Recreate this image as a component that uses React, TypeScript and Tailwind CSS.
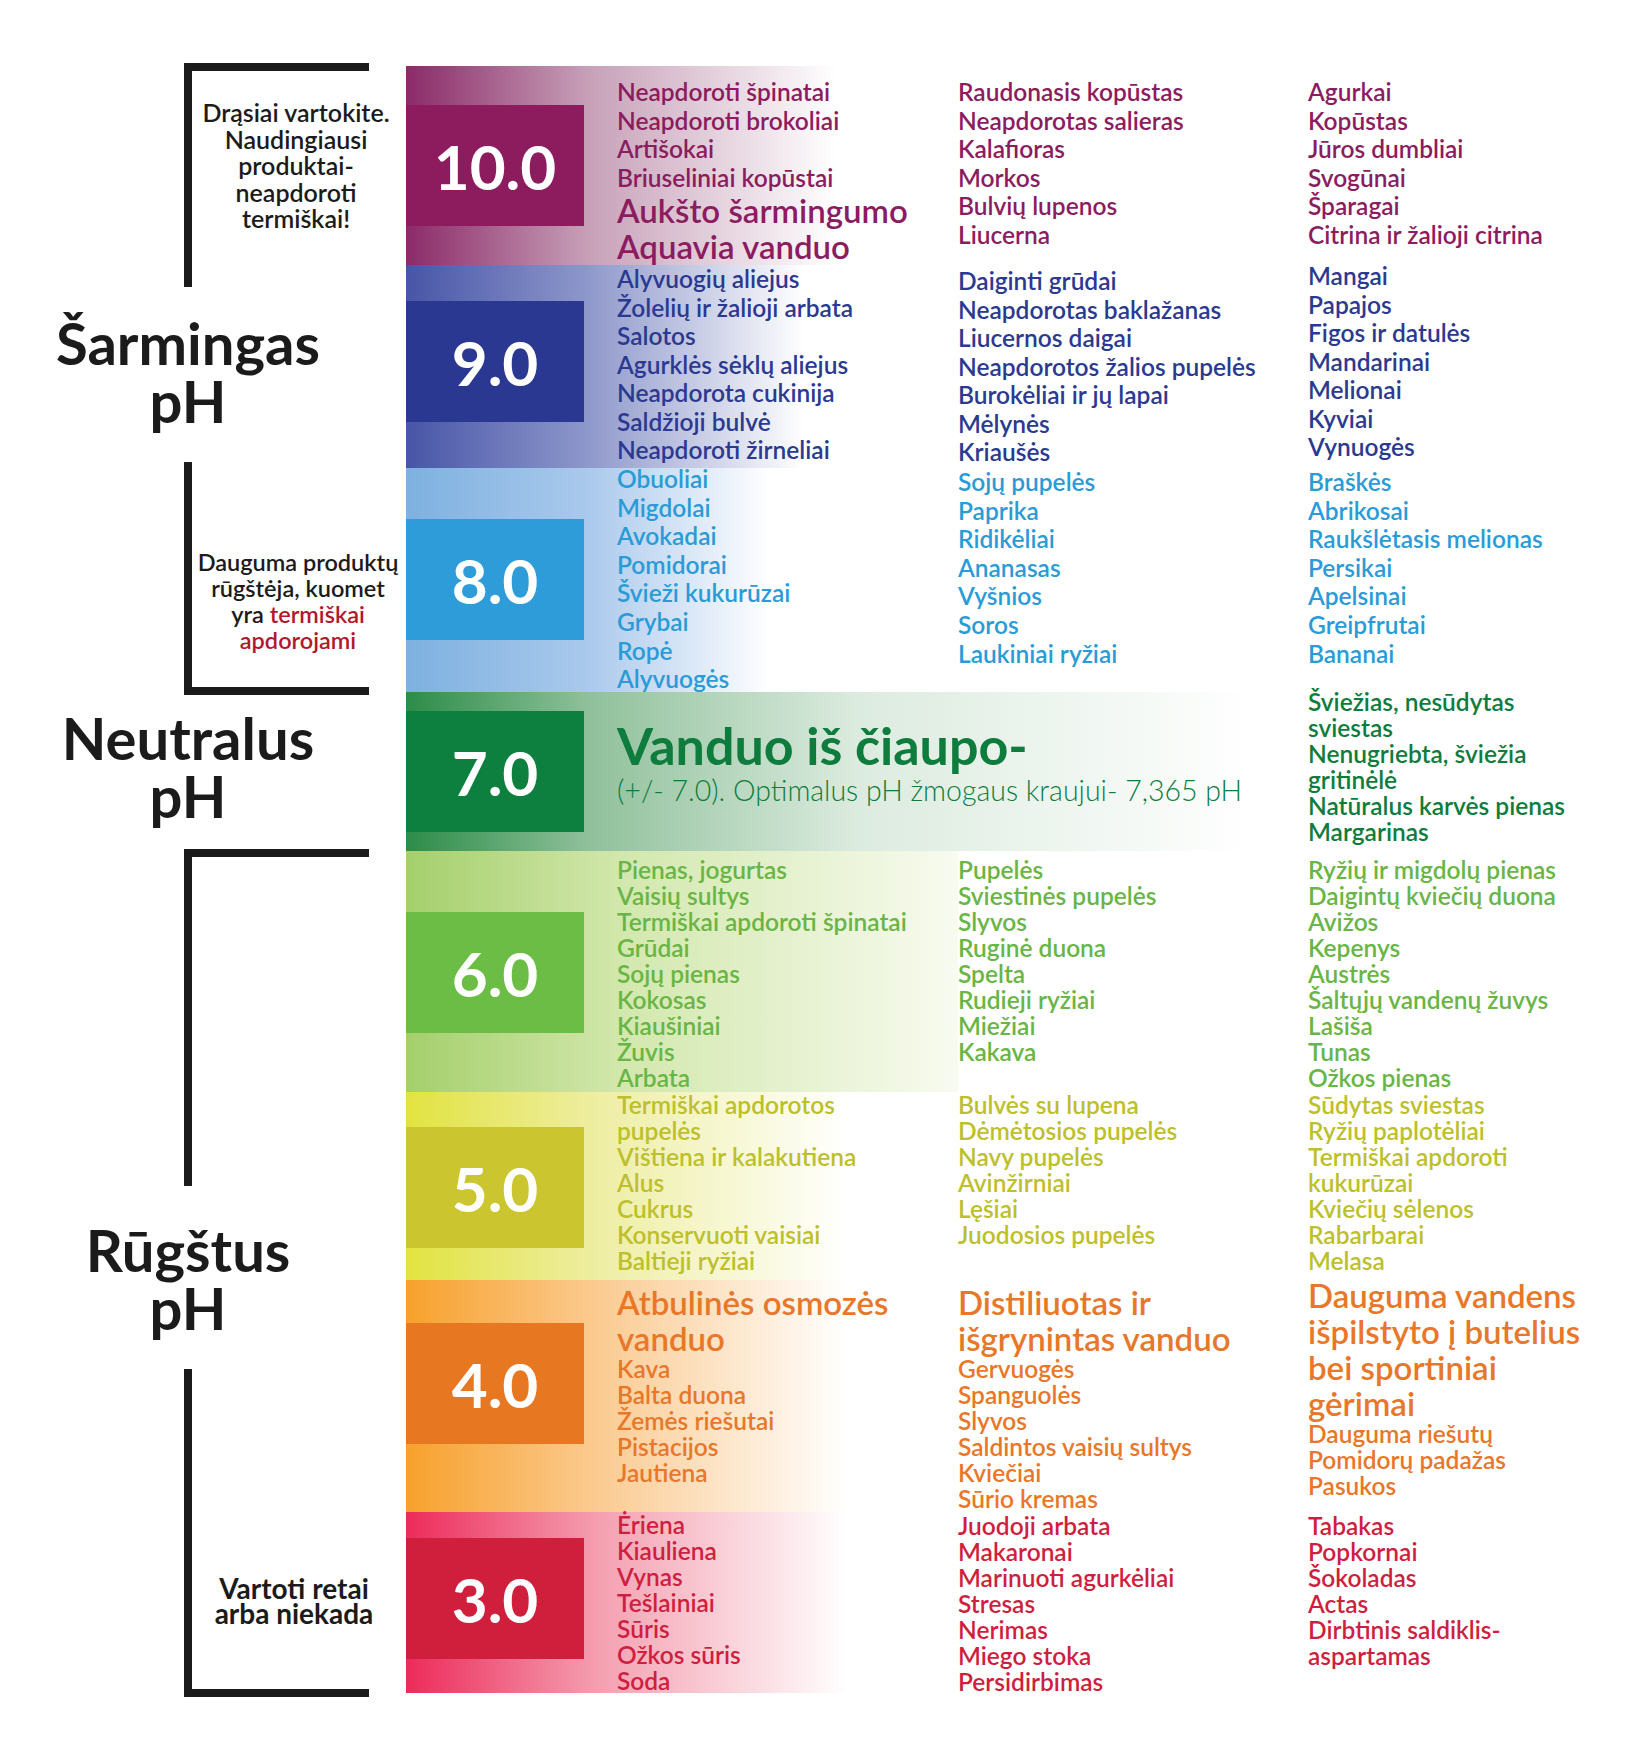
import React from "react";

type Item = string | { t: string; big: true };

type BandData = {
  num: string;
  h: string;
  grad: string;
  box: string;
  boxMt: string;
  color: string;
  lh: string;
  cols: { pt: string; items: Item[] }[];
};

const bands: BandData[] = [
  {
    num: "10.0",
    h: "h-[199px]",
    grad: "bg-[linear-gradient(to_right,#8b2a68_0%,#c7a0b8_33%,#ffffff_78%)]",
    box: "bg-[#8c1c5e]",
    boxMt: "mt-[39px]",
    color: "text-[#8b1c5f]",
    lh: "leading-[28.5px]",
    cols: [
      {
        pt: "pt-[12px]",
        items: [
          "Neapdoroti špinatai",
          "Neapdoroti brokoliai",
          "Artišokai",
          "Briuseliniai kopūstai",
          { t: "Aukšto šarmingumo", big: true },
          { t: "Aquavia vanduo", big: true },
        ],
      },
      {
        pt: "pt-[12px]",
        items: ["Raudonasis kopūstas", "Neapdorotas salieras", "Kalafioras", "Morkos", "Bulvių lupenos", "Liucerna"],
      },
      {
        pt: "pt-[12px]",
        items: ["Agurkai", "Kopūstas", "Jūros dumbliai", "Svogūnai", "Šparagai", "Citrina ir žalioji citrina"],
      },
    ],
  },
  {
    num: "9.0",
    h: "h-[203px]",
    grad: "bg-[linear-gradient(to_right,#4855a7_0%,#8e98cb_33%,#ffffff_72%)]",
    box: "bg-[#2a3891]",
    boxMt: "mt-[36px]",
    color: "text-[#2b3990]",
    lh: "leading-[28.5px]",
    cols: [
      {
        pt: "pt-0",
        items: [
          "Alyvuogių aliejus",
          "Žolelių ir žalioji arbata",
          "Salotos",
          "Agurklės sėklų aliejus",
          "Neapdorota cukinija",
          "Saldžioji bulvė",
          "Neapdoroti žirneliai",
        ],
      },
      {
        pt: "pt-[2px]",
        items: [
          "Daiginti grūdai",
          "Neapdorotas baklažanas",
          "Liucernos daigai",
          "Neapdorotos žalios pupelės",
          "Burokėliai ir jų lapai",
          "Mėlynės",
          "Kriaušės",
        ],
      },
      {
        pt: "-mt-[3px]",
        items: ["Mangai", "Papajos", "Figos ir datulės", "Mandarinai", "Melionai", "Kyviai", "Vynuogės"],
      },
    ],
  },
  {
    num: "8.0",
    h: "h-[224px]",
    grad: "bg-[linear-gradient(to_right,#7db1e0_0%,#aac9ec_33%,#ffffff_66%)]",
    box: "bg-[#2d9cd8]",
    boxMt: "mt-[51px]",
    color: "text-[#2a9bd7]",
    lh: "leading-[28.6px]",
    cols: [
      {
        pt: "-mt-[3px]",
        items: ["Obuoliai", "Migdolai", "Avokadai", "Pomidorai", "Švieži kukurūzai", "Grybai", "Ropė", "Alyvuogės"],
      },
      {
        pt: "pt-0",
        items: ["Sojų pupelės", "Paprika", "Ridikėliai", "Ananasas", "Vyšnios", "Soros", "Laukiniai ryžiai"],
      },
      {
        pt: "pt-0",
        items: ["Braškės", "Abrikosai", "Raukšlėtasis melionas", "Persikai", "Apelsinai", "Greipfrutai", "Bananai"],
      },
    ],
  },
];

const lowerBands: BandData[] = [
  {
    num: "6.0",
    h: "h-[241px]",
    grad: "bg-[linear-gradient(to_right,#a5cf6b_0%,#d3e8ae_40%,#f8fbf0_100%)]",
    box: "bg-[#6bbd45]",
    boxMt: "mt-[61px]",
    color: "text-[#69b545]",
    lh: "leading-[26px]",
    cols: [
      {
        pt: "pt-[6px]",
        items: [
          "Pienas, jogurtas",
          "Vaisių sultys",
          "Termiškai apdoroti špinatai",
          "Grūdai",
          "Sojų pienas",
          "Kokosas",
          "Kiaušiniai",
          "Žuvis",
          "Arbata",
        ],
      },
      {
        pt: "pt-[6px]",
        items: ["Pupelės", "Sviestinės pupelės", "Slyvos", "Ruginė duona", "Spelta", "Rudieji ryžiai", "Miežiai", "Kakava"],
      },
      {
        pt: "pt-[6px]",
        items: [
          "Ryžių ir migdolų pienas",
          "Daigintų kviečių duona",
          "Avižos",
          "Kepenys",
          "Austrės",
          "Šaltųjų vandenų žuvys",
          "Lašiša",
          "Tunas",
          "Ožkos pienas",
        ],
      },
    ],
  },
  {
    num: "5.0",
    h: "h-[188px]",
    grad: "bg-[linear-gradient(to_right,#e2e340_0%,#eeeea4_35%,#ffffff_80%)]",
    box: "bg-[#cbc52f]",
    boxMt: "mt-[35px]",
    color: "text-[#bdbf2d]",
    lh: "leading-[26px]",
    cols: [
      {
        pt: "pt-0",
        items: [
          "Termiškai apdorotos",
          "pupelės",
          "Vištiena ir kalakutiena",
          "Alus",
          "Cukrus",
          "Konservuoti vaisiai",
          "Baltieji ryžiai",
        ],
      },
      {
        pt: "pt-0",
        items: ["Bulvės su lupena", "Dėmėtosios pupelės", "Navy pupelės", "Avinžirniai", "Lęšiai", "Juodosios pupelės"],
      },
      {
        pt: "pt-0",
        items: [
          "Sūdytas sviestas",
          "Ryžių paplotėliai",
          "Termiškai apdoroti",
          "kukurūzai",
          "Kviečių sėlenos",
          "Rabarbarai",
          "Melasa",
        ],
      },
    ],
  },
  {
    num: "4.0",
    h: "h-[232px]",
    grad: "bg-[linear-gradient(to_right,#f7a12c_0%,#fbcb92_35%,#ffffff_80%)]",
    box: "bg-[#e87722]",
    boxMt: "mt-[43px]",
    color: "text-[#e8772a]",
    lh: "leading-[26px]",
    cols: [
      {
        pt: "pt-[4px]",
        items: [
          { t: "Atbulinės osmozės", big: true },
          { t: "vanduo", big: true },
          "Kava",
          "Balta duona",
          "Žemės riešutai",
          "Pistacijos",
          "Jautiena",
        ],
      },
      {
        pt: "pt-[4px]",
        items: [
          { t: "Distiliuotas ir", big: true },
          { t: "išgrynintas vanduo", big: true },
          "Gervuogės",
          "Spanguolės",
          "Slyvos",
          "Saldintos vaisių sultys",
          "Kviečiai",
          "Sūrio kremas",
        ],
      },
      {
        pt: "-mt-[3px]",
        items: [
          { t: "Dauguma vandens", big: true },
          { t: "išpilstyto į butelius", big: true },
          { t: "bei sportiniai", big: true },
          { t: "gėrimai", big: true },
          "Dauguma riešutų",
          "Pomidorų padažas",
          "Pasukos",
        ],
      },
    ],
  },
  {
    num: "3.0",
    h: "h-[181px]",
    grad: "bg-[linear-gradient(to_right,#ec2b5a_0%,#f4a0b1_35%,#ffffff_80%)]",
    box: "bg-[#d01f3c]",
    boxMt: "mt-[26px]",
    color: "text-[#cf1f40]",
    lh: "leading-[26px]",
    cols: [
      {
        pt: "pt-0",
        items: ["Ėriena", "Kiauliena", "Vynas", "Tešlainiai", "Sūris", "Ožkos sūris", "Soda"],
      },
      {
        pt: "pt-[1px]",
        items: ["Juodoji arbata", "Makaronai", "Marinuoti agurkėliai", "Stresas", "Nerimas", "Miego stoka", "Persidirbimas"],
      },
      {
        pt: "pt-[1px]",
        items: ["Tabakas", "Popkornai", "Šokoladas", "Actas", "Dirbtinis saldiklis-", "aspartamas"],
      },
    ],
  },
];

const List = ({ items, pt }: { items: Item[]; pt: string }) => (
  <div className={`flex flex-col ${pt}`}>
    {items.map((it, i) =>
      typeof it === "string" ? (
        <div key={i} className="whitespace-nowrap text-[24.5px]">
          {it}
        </div>
      ) : (
        <div key={i} className="whitespace-nowrap text-[33px] leading-[36px]">
          {it.t}
        </div>
      )
    )}
  </div>
);

const NumBox = ({ num, bg, mt }: { num: string; bg: string; mt: string }) => (
  <div className={`flex h-[121px] w-[178px] shrink-0 items-center justify-center text-[62px] font-bold leading-none text-white ${bg} ${mt}`}>
    {num}
  </div>
);

const Band = ({ b }: { b: BandData }) => (
  <div className={`flex font-semibold ${b.h} ${b.color} ${b.lh}`}>
    <div className={`flex w-[552px] shrink-0 items-start ${b.grad}`}>
      <NumBox num={b.num} bg={b.box} mt={b.boxMt} />
      <div className="ml-[33px]">
        <List items={b.cols[0].items} pt={b.cols[0].pt} />
      </div>
    </div>
    <div className="w-[350px] shrink-0">
      <List items={b.cols[1].items} pt={b.cols[1].pt} />
    </div>
    <div>
      <List items={b.cols[2].items} pt={b.cols[2].pt} />
    </div>
  </div>
);

const Label = ({ top, mt }: { top: string; mt: string }) => (
  <div className={`w-[376px] text-center text-[58px] font-bold leading-[58px] text-[#1b1b1b] ${mt}`}>
    <div>{top}</div>
    <div>pH</div>
  </div>
);

export default function App() {
  return (
    <div className="flex h-[1747px] w-[1650px] overflow-hidden bg-white font-['Lato',sans-serif]">
      {/* left: brackets and group labels */}
      <div className="flex w-[406px] shrink-0 flex-col text-[#1b1b1b]">
        <div className="ml-[184px] mt-[63px] h-[224px] w-[185px] border-l-8 border-t-8 border-[#1b1b1b] pt-[28px]">
          <div className="w-[208px] whitespace-nowrap text-center text-[25px] font-semibold leading-[26.5px]">
            <div>Drąsiai vartokite.</div>
            <div>Naudingiausi</div>
            <div>produktai-</div>
            <div>neapdoroti</div>
            <div>termiškai!</div>
          </div>
        </div>
        <Label top="Šarmingas" mt="mt-[27px]" />
        <div className="ml-[184px] mt-[32px] h-[233px] w-[185px] border-b-8 border-l-8 border-[#1b1b1b] pt-[87px]">
          <div className="w-[212px] whitespace-nowrap text-center text-[23.5px] font-semibold leading-[26px]">
            <div>Dauguma produktų</div>
            <div>rūgštėja, kuomet</div>
            <div>
              yra <span className="text-[#b1182c]">termiškai</span>
            </div>
            <div className="text-[#b1182c]">apdorojami</div>
          </div>
        </div>
        <Label top="Neutralus" mt="mt-[14px]" />
        <div className="ml-[184px] mt-[24px] h-[337px] w-[185px] border-l-8 border-t-8 border-[#1b1b1b]" />
        <Label top="Rūgštus" mt="mt-[35px]" />
        <div className="ml-[184px] mt-[32px] h-[328px] w-[185px] border-b-8 border-l-8 border-[#1b1b1b] pt-[207px]">
          <div className="w-[204px] whitespace-nowrap text-center text-[28px] font-bold leading-[25px]">
            <div>Vartoti retai</div>
            <div>arba niekada</div>
          </div>
        </div>
      </div>

      {/* right: pH scale */}
      <div className="flex flex-1 flex-col pt-[66px]">
        {bands.map((b) => (
          <Band key={b.num} b={b} />
        ))}

        <div className="flex h-[159px] font-semibold leading-[26px] text-[#0e7c3d]">
          <div className="flex w-[902px] shrink-0 items-start bg-[linear-gradient(to_right,#2b8c48_0%,#8fc09a_20%,#dcebdf_50%,#ffffff_94%)]">
            <NumBox num="7.0" bg="bg-[#0d8040]" mt="mt-[19px]" />
            <div className="ml-[33px] pt-[25px]">
              <div className="whitespace-nowrap text-[52px] font-bold leading-[56px]">Vanduo iš čiaupo-</div>
              <div className="whitespace-nowrap text-[28.5px] font-light leading-[34px]">
                (+/- 7.0). Optimalus pH žmogaus kraujui- 7,365 pH
              </div>
            </div>
          </div>
          <div className="-mt-[3px] whitespace-nowrap text-[24.5px]">
            <div>Šviežias, nesūdytas</div>
            <div>sviestas</div>
            <div>Nenugriebta, šviežia</div>
            <div>gritinėlė</div>
            <div>Natūralus karvės pienas</div>
            <div>Margarinas</div>
          </div>
        </div>

        {lowerBands.map((b) => (
          <Band key={b.num} b={b} />
        ))}
      </div>
    </div>
  );
}
